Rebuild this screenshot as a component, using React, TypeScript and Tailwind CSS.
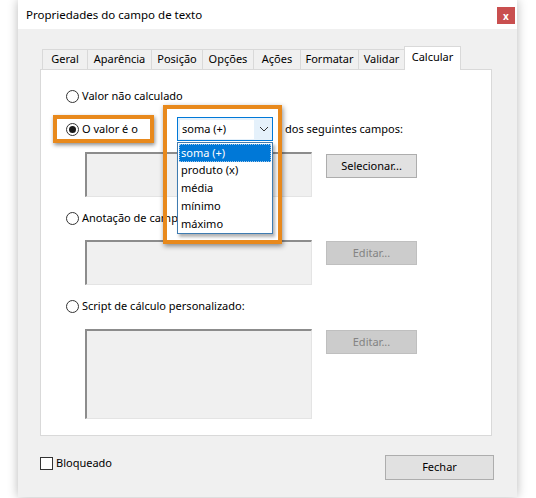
import React from "react";

const font = { fontFamily: '"Noto Sans", "Open Sans", sans-serif' };

function Radio({ checked = false }: { checked?: boolean }) {
  return (
    <span className="w-[13px] h-[13px] rounded-full border border-[#333333] bg-white flex items-center justify-center shrink-0">
      {checked && <span className="w-[7px] h-[7px] rounded-full bg-[#1a1a1a]" />}
    </span>
  );
}

function TextBox({ h }: { h: string }) {
  return (
    <div className={`w-[227px] ${h} bg-[#f0f0f0] border-t-2 border-l-2 border-t-[#8c8c8c] border-l-[#8c8c8c] border-r border-b border-r-[#e4e4e4] border-b-[#e4e4e4]`} />
  );
}

function Btn({ label, disabled = false }: { label: string; disabled?: boolean }) {
  return (
    <div
      className={`w-[91px] h-[24px] flex items-center justify-center border ${
        disabled ? "bg-[#cccccc] border-[#bfbfbf] text-[#838383]" : "bg-[#e1e1e1] border-[#adadad] text-black"
      }`}
    >
      {label}
    </div>
  );
}

const tabs: { label: string; w: string }[] = [
  { label: "Geral", w: "w-[46px]" },
  { label: "Aparência", w: "w-[65px]" },
  { label: "Posição", w: "w-[52px]" },
  { label: "Opções", w: "w-[52px]" },
  { label: "Ações", w: "w-[48px]" },
  { label: "Formatar", w: "w-[59px]" },
  { label: "Validar", w: "w-[47px]" },
];

export default function App() {
  return (
    <div className="w-[536px] h-[498px] bg-white overflow-hidden text-[11px] text-black" style={font}>
      <div className="ml-[18px] w-[499px] h-[497px] bg-[#f0f0f0] flex flex-col shadow-[0_0_10px_rgba(0,0,0,0.28)]">
        {/* title bar */}
        <div className="h-[29px] bg-white flex justify-between">
          <span className="pl-[8px] pt-[6px] text-[11.5px]">Propriedades do campo de texto</span>
          <div className="mt-[7px] mr-[2px] w-[18px] h-[17px] bg-[#c94f4f] flex items-center justify-center text-white text-[10px] font-bold leading-none">
            x
          </div>
        </div>

        {/* body */}
        <div className="pl-[22px] pr-[25px] pt-[17px] flex flex-col">
          {/* tabs */}
          <div className="flex items-end pl-[2px] h-[23px]">
            {tabs.map((t, i) => (
              <div
                key={t.label}
                className={`${t.w} h-[20px] ${i === 0 ? "" : "-ml-px"} border border-b-0 border-[#d9d9d9] bg-[#f0f0f0] flex items-center justify-center`}
              >
                {t.label}
              </div>
            ))}
            <div className="w-[57px] h-[24px] -ml-px -mb-px border border-b-0 border-[#d9d9d9] bg-white flex items-start justify-center pt-[2px] relative z-10">
              Calcular
            </div>
          </div>

          {/* panel */}
          <div className="relative h-[367px] bg-white border border-[#d9d9d9] pl-[25px] pt-[17px] flex flex-col">
            <div className="flex items-center gap-[3px] h-[18px]">
              <Radio />
              <span>Valor não calculado</span>
            </div>

            <div className="flex items-center h-[24px] mt-[12px]">
              <div className="w-[111px] flex items-center gap-[3px]">
                <Radio checked />
                <span>O valor é o</span>
              </div>
              <div className="w-[96px] h-[24px] border border-[#0078d7] bg-[#e5f1fb] flex items-center pl-[2px]">
                <div className="w-[74px] h-[19px] bg-white flex items-center pl-[2px]">soma (+)</div>
                <svg className="ml-[5px]" width="10" height="6" viewBox="0 0 10 6">
                  <path d="M1 1 L5 5 L9 1" fill="none" stroke="#333" strokeWidth="1" />
                </svg>
              </div>
              <span className="ml-[12px]">dos seguintes campos:</span>
            </div>

            <div className="flex items-start mt-[11px] pl-[19px] gap-[14px]">
              <TextBox h="h-[45px]" />
              <div className="mt-[2px]">
                <Btn label="Selecionar..." />
              </div>
            </div>

            <div className="flex items-center gap-[3px] h-[18px] mt-[12px]">
              <Radio />
              <span>Anotação de campo simplificada:</span>
            </div>

            <div className="flex items-start mt-[13px] pl-[19px] gap-[14px]">
              <TextBox h="h-[45px]" />
              <div className="mt-[1px]">
                <Btn label="Editar..." disabled />
              </div>
            </div>

            <div className="flex items-center gap-[3px] h-[18px] mt-[12px]">
              <Radio />
              <span>Script de cálculo personalizado:</span>
            </div>

            <div className="flex items-start mt-[14px] pl-[19px] gap-[14px]">
              <TextBox h="h-[90px]" />
              <div className="mt-[1px]">
                <Btn label="Editar..." disabled />
              </div>
            </div>

            {/* overlays: highlight boxes and open dropdown list */}
            <div className="absolute left-[12px] top-[45px] w-[101px] h-[28px] border-[4px] border-[#e8891c] shadow-[1px_2px_4px_rgba(0,0,0,0.45)]" />
            <div className="absolute left-[136px] top-[72px] w-[96px] h-[92px] bg-white border border-[#3f7cb1] shadow-[2px_3px_3px_rgba(0,0,0,0.3)] flex flex-col">
              <div className="h-[18px] mx-px mt-px bg-[#0078d7] text-white flex items-center pl-[2px] outline-1 outline-dotted outline-[#9fc6ea] -outline-offset-1">
                soma (+)
              </div>
              <div className="h-[18px] flex items-center pl-[3px]">produto (x)</div>
              <div className="h-[18px] flex items-center pl-[3px]">média</div>
              <div className="h-[18px] flex items-center pl-[3px]">mínimo</div>
              <div className="h-[18px] flex items-center pl-[3px]">máximo</div>
            </div>
            <div className="absolute left-[122px] top-[35px] w-[119px] h-[139px] border-[4px] border-[#e8891c] shadow-[1px_2px_5px_rgba(0,0,0,0.45)]" />
          </div>

          {/* footer */}
          <div className="flex items-start justify-between mt-[19px] mr-[-2px]">
            <div className="flex items-center gap-[3px] mt-[1px] h-[15px]">
              <span className="w-[13px] h-[13px] border border-[#333333] bg-white" />
              <span>Bloqueado</span>
            </div>
            <div className="w-[109px] h-[25px] bg-[#e1e1e1] border border-[#adadad] flex items-center justify-center">
              Fechar
            </div>
          </div>
        </div>
      </div>
    </div>
  );
}
